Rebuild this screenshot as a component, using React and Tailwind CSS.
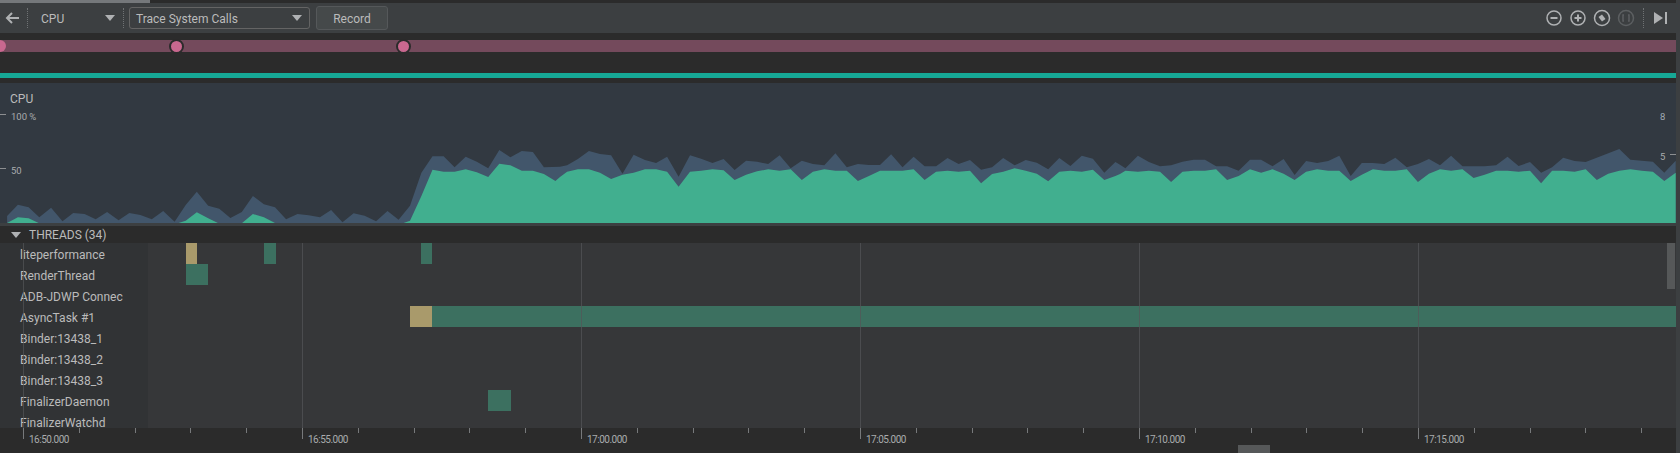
import React from 'react'

// chart samples read off the trace: [x, y] in crop coords, converted to panel coords here
const toReal = (offset, pts) => pts.map(([x, y]) => [offset + x / 2.8, 7 + y / 3])

const cpuUsage = [
  ...toReal(0, [[20,378],[50,344],[80,352],[110,382],[143,353],[175,394],[205,369],[237,372],[268,388],[300,366],[332,391],[362,369],[393,375],[425,388],[457,363],[489,395],[520,345],[551,305],[583,347],[614,356],[645,384],[677,366],[708,318],[739,343],[770,352],[801,388],[833,372],[864,376],[896,382],[927,360],[959,397],[990,370],[1021,377],[1053,394],[1085,363],[1116,389],[1148,347],[1180,248],[1211,199],[1242,199],[1273,232],[1304,200],[1335,215],[1367,235],[1398,180],[1429,202],[1461,183],[1492,186],[1523,232]]),
  ...toReal(560, [[0,230],[20,226],[50,207],[81,183],[112,192],[143,196],[175,251],[206,194],[238,210],[269,219],[300,200],[332,260],[364,196],[395,206],[427,219],[458,207],[489,240],[521,212],[552,215],[583,222],[615,196],[646,235],[677,212],[708,222],[740,226],[771,190],[803,232],[834,222],[865,225],[896,225],[927,193],[959,232],[990,200],[1021,229],[1053,229],[1085,204],[1116,222],[1148,210],[1179,239],[1210,232],[1241,204],[1273,226],[1304,210],[1335,218],[1367,238],[1398,204],[1429,228],[1461,197],[1492,206],[1524,248],[1555,216]]),
  ...toReal(1120, [[0,224],[15,235],[50,197],[81,216],[112,229],[143,226],[175,215],[206,209],[238,209],[269,229],[300,229],[332,242],[364,209],[395,209],[427,229],[458,207],[489,255],[521,213],[552,219],[583,213],[614,197],[646,258],[677,219],[708,219],[740,222],[771,203],[803,232],[834,222],[865,207],[896,226],[927,197],[959,229],[990,229],[1021,229],[1053,226],[1085,200],[1116,228],[1148,216],[1179,248],[1210,232],[1241,203],[1273,213],[1304,216],[1398,177],[1429,209],[1461,212],[1492,215],[1524,248],[1556,212]]),
]

const appUsage = [
  ...toReal(0, [[20,399],[50,382],[80,385],[108,399],[500,399],[520,392],[551,367],[583,385],[610,399],[678,399],[708,372],[739,382],[770,399],[1130,399],[1148,392],[1180,318],[1211,239],[1242,245],[1273,245],[1304,238],[1335,247],[1367,261],[1398,221],[1429,226],[1461,242],[1492,242],[1523,252],[1555,273]]),
  ...toReal(560, [[0,261],[20,245],[50,238],[81,238],[112,248],[143,267],[175,254],[206,248],[238,238],[269,238],[300,245],[332,290],[364,245],[395,242],[427,238],[458,241],[489,270],[521,254],[552,244],[583,238],[615,242],[646,238],[677,270],[708,245],[740,238],[771,242],[803,242],[834,273],[865,258],[896,242],[927,242],[959,242],[990,238],[1021,270],[1053,245],[1085,242],[1116,245],[1148,242],[1179,280],[1210,252],[1241,245],[1273,235],[1304,242],[1335,251],[1367,274],[1398,245],[1429,242],[1461,245],[1492,239],[1524,270],[1555,258]]),
  ...toReal(1120, [[0,252],[15,242],[50,245],[81,242],[112,245],[143,276],[175,245],[206,242],[238,242],[269,238],[300,270],[332,258],[364,238],[395,248],[427,238],[458,251],[489,270],[521,245],[552,238],[583,242],[614,242],[646,273],[677,254],[708,238],[740,242],[771,242],[803,238],[834,276],[865,251],[896,238],[927,242],[959,238],[990,264],[1021,254],[1053,242],[1085,242],[1116,245],[1148,242],[1179,280],[1210,242],[1241,242],[1273,245],[1304,238],[1335,270],[1367,251],[1398,242],[1429,238],[1461,242],[1492,245],[1524,273],[1556,248]]),
]

const area = (pts) => {
  const first = pts[0][0]
  const last = pts[pts.length - 1][0]
  return `${first},140 ` + pts.map(([x, y]) => `${x.toFixed(1)},${y.toFixed(1)}`).join(' ') + ` ${last},140`
}

const threads = [
  { name: 'liteperformance', bars: [{ x: 186, w: 11, c: '#a99a6b' }, { x: 264, w: 12, c: '#3c7060' }, { x: 421, w: 11, c: '#3c7060' }] },
  { name: 'RenderThread', bars: [{ x: 186, w: 22, c: '#3c7060' }] },
  { name: 'ADB-JDWP Connec', bars: [] },
  { name: 'AsyncTask #1', bars: [{ x: 410, w: 22, c: '#a99a6b' }, { x: 432, w: 1244, c: '#3c7060' }] },
  { name: 'Binder:13438_1', bars: [] },
  { name: 'Binder:13438_2', bars: [] },
  { name: 'Binder:13438_3', bars: [] },
  { name: 'FinalizerDaemon', bars: [{ x: 488, w: 23, c: '#3c7060' }] },
  { name: 'FinalizerWatchd', bars: [] },
]

const majorTicks = [
  { x: 23, label: '16:50.000' },
  { x: 302, label: '16:55.000' },
  { x: 581, label: '17:00.000' },
  { x: 860, label: '17:05.000' },
  { x: 1139, label: '17:10.000' },
  { x: 1418, label: '17:15.000' },
]
const minorTicks = []
for (let i = 0; i < 30; i++) {
  if (i % 5 !== 0) minorTicks.push(Math.round(23 + i * 55.8))
}

const Dots = () => <div className="w-px h-[20px] border-l border-dotted border-[#6f7274]" />

const Caret = ({ className }) => (
  <svg width="10" height="6" viewBox="0 0 10 6" className={className}>
    <polygon points="0,0 10,0 5,6" fill="#afb1b3" />
  </svg>
)

const RoundIcon = ({ children, dim, r = 7 }) => (
  <svg width="18" height="18" viewBox="0 0 18 18" fill="none" stroke={dim ? '#5c5f61' : '#afb1b3'} strokeWidth="1.5">
    <circle cx="9" cy="9" r={r} />
    {children}
  </svg>
)

const EventDot = ({ x }) => (
  <div
    className="absolute top-[-1.5px] w-[15px] h-[15px] rounded-full bg-[#c9688f] border-2 border-[#2b2b2b]"
    style={{ left: x - 7.5 }}
  />
)

export default function App() {
  return (
    <div className="flex w-[1680px] h-[453px] overflow-hidden bg-[#3c3f41] text-[#bbbbbb] font-['Roboto','Open_Sans',sans-serif] text-[12px]">
      <div className="flex flex-col w-[1676px] shrink-0">
        {/* top scroll strip */}
        <div className="h-[3px] bg-[#2b2b2b] shrink-0">
          <div className="w-[150px] h-full bg-[#75787b]" />
        </div>

        {/* toolbar */}
        <div className="h-[30px] shrink-0 bg-[#3c3f41] flex items-center">
          <svg width="14" height="12" viewBox="0 0 14 12" className="ml-[5px]" fill="none" stroke="#afb1b3" strokeWidth="2">
            <path d="M14 6H2M7 1L2 6l5 5" />
          </svg>
          <div className="ml-[8px]"><Dots /></div>
          <span className="ml-[13px] w-[64px] pt-px">CPU</span>
          <Caret />
          <div className="ml-[8px]"><Dots /></div>
          <div className="ml-[5px] w-[181px] h-[22px] border border-[#646464] rounded-[3px] flex items-center justify-between pl-[6px] pr-[7px]">
            <span className="pt-px">Trace System Calls</span>
            <Caret />
          </div>
          <button className="ml-[6px] w-[72px] h-[24px] pt-px bg-[#45494a] border border-[#55585a] rounded-[3px] text-[#bbbbbb]">Record</button>
          <div className="ml-auto flex items-center gap-[6px] mr-[9px]">
            <RoundIcon><path d="M5.5 9h7" strokeWidth="2" /></RoundIcon>
            <RoundIcon><path d="M5.5 9h7M9 5.5v7" strokeWidth="2" /></RoundIcon>
            <RoundIcon r={7.5}>
              <path d="M5.5 8 9 5.5 12.5 10 9 12.5z" fill="#afb1b3" stroke="none" />
            </RoundIcon>
            <RoundIcon dim r={7.5}>
              <path d="M7 6H6v6h1M11 6h1v6h-1" />
            </RoundIcon>
            <div className="ml-[2px]"><Dots /></div>
            <svg width="13" height="12" viewBox="0 0 13 12" className="ml-[4px]">
              <polygon points="0,0 9,6 0,12" fill="#afb1b3" />
              <rect x="11" y="0" width="2" height="12" fill="#afb1b3" />
            </svg>
          </div>
        </div>

        {/* event track */}
        <div className="h-[40px] shrink-0 bg-[#2b2b2b] pt-[7px]">
          <div className="relative h-[12px] bg-[#744a5c]">
            <div className="absolute left-[-6px] top-0 w-[12px] h-[12px] rounded-full bg-[#c9688f]" />
            <EventDot x={176.5} />
            <EventDot x={403.5} />
          </div>
        </div>

        {/* lifecycle track */}
        <div className="h-[10px] shrink-0 bg-[#2b2b2b] pb-[5px]">
          <div className="h-[5px] bg-[#16a896]" />
        </div>

        {/* cpu chart */}
        <div className="relative h-[140px] shrink-0 bg-[#323941]">
          <svg width="1676" height="140" viewBox="0 0 1676 140" className="absolute inset-0">
            <polygon points={area(cpuUsage)} fill="#42566b" />
            <polygon points={area(appUsage)} fill="#41af8f" />
          </svg>
          <span className="absolute left-[10px] top-[7px]">CPU</span>
          <div className="absolute left-0 top-[31px] w-[6px] h-px bg-[#8c8e90]" />
          <span className="absolute left-[11px] top-[27px] text-[9.5px] leading-[13px] text-[#a9abad]">100 %</span>
          <div className="absolute left-0 top-[85px] w-[6px] h-px bg-[#8c8e90]" />
          <span className="absolute left-[11px] top-[81px] text-[9.5px] leading-[13px] text-[#a9abad]">50</span>
          <span className="absolute left-[1660px] top-[27px] text-[9.5px] leading-[13px] text-[#a0aab4]">8</span>
          <span className="absolute left-[1660px] top-[67px] text-[9.5px] leading-[13px] text-[#a9abad]">5</span>
          <div className="absolute right-0 top-[71px] w-[6px] h-px bg-[#8c8e90]" />
        </div>

        {/* threads header */}
        <div className="h-[3px] shrink-0 bg-[#3c3f41]" />
        <div className="h-[17px] shrink-0 bg-[#2b2b2b] flex items-center pl-[11px]">
          <Caret />
          <span className="ml-[8px]">THREADS (34)</span>
        </div>

        {/* thread rows, the last one runs under the axis */}
        <div className="relative h-[185px] shrink-0 bg-[#363739]">
          {threads.map((t) => (
            <div key={t.name} className="flex h-[21px]">
              <div className="w-[148px] shrink-0 bg-[#313335] pl-[20px] pt-[2px] leading-[21px]">{t.name}</div>
              <div className="relative flex-1">
                {t.bars.map((b) => (
                  <div
                    key={b.x}
                    className="absolute top-0 h-full"
                    style={{ left: b.x - 148, width: b.w, background: b.c }}
                  />
                ))}
              </div>
            </div>
          ))}
          {majorTicks.map((t) => (
            <div key={t.x} className="absolute top-0 h-[185px] w-px bg-[#545658]/70" style={{ left: t.x }} />
          ))}
          {/* scrollbar */}
          <div className="absolute right-[1px] top-0 w-[8px] h-[46px] bg-[#565859]" />
        </div>

        {/* time axis */}
        <div className="relative flex-1 bg-[#2b2b2b]">
          {minorTicks.map((x) => (
            <div key={x} className="absolute top-0 h-[5px] w-px bg-[#77797b]" style={{ left: x }} />
          ))}
          {majorTicks.map((t) => (
            <React.Fragment key={t.x}>
              <div className="absolute top-0 h-[11px] w-px bg-[#77797b]" style={{ left: t.x }} />
              <span className="absolute top-[5px] text-[10px] leading-[14px] tracking-[-0.5px] text-[#a9abad]" style={{ left: t.x + 6 }}>{t.label}</span>
            </React.Fragment>
          ))}
          <div className="absolute left-[1238px] bottom-0 w-[32px] h-[8px] bg-[#565859]" />
        </div>
      </div>
      <div className="flex-1 bg-[#3c3f41]" />
    </div>
  )
}
